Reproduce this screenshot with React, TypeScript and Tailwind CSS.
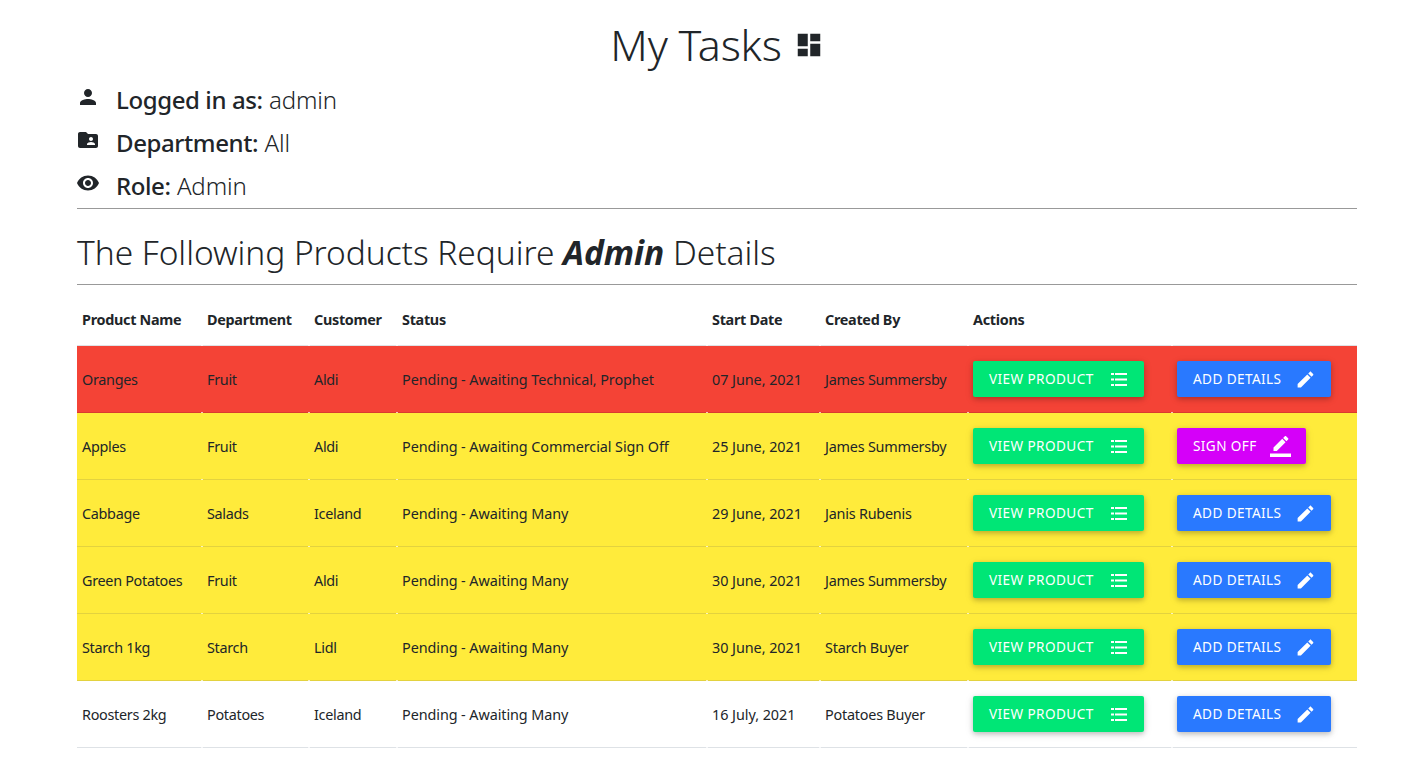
const FONT = "font-['Noto_Sans','Open_Sans',sans-serif]";
const P = {
  person: <path d="M12 12c2.21 0 4-1.79 4-4s-1.79-4-4-4-4 1.79-4 4 1.79 4 4 4zm0 2c-2.67 0-8 1.34-8 4v2h16v-2c0-2.66-5.33-4-8-4z" />,
  folder: <path d="M20 6h-8l-2-2H4c-1.1 0-1.99.9-1.99 2L2 18c0 1.1.9 2 2 2h16c1.1 0 2-.9 2-2V8c0-1.1-.9-2-2-2zm-5 3c1.1 0 2 .9 2 2s-.9 2-2 2-2-.9-2-2 .9-2 2-2zm4 8h-8v-1c0-1.33 2.67-2 4-2s4 .67 4 2v1z" />,
  eye: <path d="M12 4.5C7 4.5 2.73 7.61 1 12c1.73 4.39 6 7.5 11 7.5s9.27-3.11 11-7.5c-1.73-4.39-6-7.5-11-7.5zM12 17c-2.76 0-5-2.24-5-5s2.24-5 5-5 5 2.24 5 5-2.24 5-5 5zm0-8c-1.66 0-3 1.34-3 3s1.34 3 3 3 3-1.34 3-3-1.34-3-3-3z" />,
  dash: <path d="M3 13h8V3H3v10zm0 8h8v-6H3v6zm10 0h8V11h-8v10zm0-18v6h8V3h-8z" />,
  pen: <path d="M3 17.25V21h3.75L17.81 9.94l-3.75-3.75L3 17.25zM20.71 7.04c.39-.39.39-1.02 0-1.41l-2.34-2.34c-.39-.39-1.02-.39-1.41 0l-1.83 1.83 3.75 3.75 1.83-1.83z" />,
  sign: <><path d="M17.75 7L14 3.25l-10 10V17h3.75l10-10zm2.96-2.96c.39-.39.39-1.02 0-1.41L18.37.29c-.39-.39-1.02-.39-1.41 0L15 2.25 18.75 6l1.96-1.96z" /><path d="M0 20h24v4H0z" /></>,
};
function Icon({ d, className }: { d: keyof typeof P; className: string }) {
  return <svg viewBox="0 0 24 24" fill="currentColor" className={className}>{P[d]}</svg>;
}
function ListIcon() {
  return (
    <svg viewBox="0 0 16 13" fill="currentColor" className="w-[16px] h-[13px] ml-[17px]">
      <path d="M0 0h3v2H0zM4 0h12v2H4zM0 5.5h3v2H0zM4 5.5h12v2H4zM0 11h3v2H0zM4 11h12v2H4z" />
    </svg>
  );
}
type Row = [string, string, string, string, string, string, string, string];
const R = "bg-[#f44336]", Y = "bg-[#ffeb3b]", W = "bg-white";
const rows: Row[] = [
  ["Oranges", "Fruit", "Aldi", "Pending - Awaiting Technical, Prophet", "07 June, 2021", "James Summersby", R, "border-[#d93a30]"],
  ["Apples", "Fruit", "Aldi", "Pending - Awaiting Commercial Sign Off", "25 June, 2021", "James Summersby", Y, "border-[#e3d23f]"],
  ["Cabbage", "Salads", "Iceland", "Pending - Awaiting Many", "29 June, 2021", "Janis Rubenis", Y, "border-[#e3d23f]"],
  ["Green Potatoes", "Fruit", "Aldi", "Pending - Awaiting Many", "30 June, 2021", "James Summersby", Y, "border-[#e3d23f]"],
  ["Starch 1kg", "Starch", "Lidl", "Pending - Awaiting Many", "30 June, 2021", "Starch Buyer", Y, "border-[#e3d23f]"],
  ["Roosters 2kg", "Potatoes", "Iceland", "Pending - Awaiting Many", "16 July, 2021", "Potatoes Buyer", W, "border-[#dee2e6]"],
];
const heads = ["Product Name", "Department", "Customer", "Status", "Start Date", "Created By", "Actions", ""];
const widths = ["w-[125px]", "w-[107px]", "w-[88px]", "w-[310px]", "w-[113px]", "w-[148px]", "w-[204px]", "w-[185px]"];
const track = ["tracking-[-0.3px]", "tracking-[-0.3px]", "tracking-[-0.3px]", "tracking-[-0.08px]", "tracking-[-0.05px]", "tracking-[-0.22px]"];
const btn = "inline-flex items-center h-[36px] rounded-[2px] pl-[16px] text-white text-[13.6px] tracking-[0.4px] shadow-[0_2px_5px_rgba(0,0,0,0.2),0_2px_10px_rgba(0,0,0,0.1)]";
const tick = "relative not-first:after:absolute not-first:after:left-[-1px] not-first:after:bottom-[-1px] not-first:after:w-[2px] not-first:after:h-[1px] not-first:after:bg-white/70";
const td = `${tick} px-[5px] py-0 align-middle text-[14.4px] text-[#212529] border-b whitespace-nowrap`;
export default function App() {
  return (
    <div className={`${FONT} bg-white min-h-[761px] text-[#212529] pl-[77px] pr-[61px]`}>
      <h1 className="h-[78px] pt-[14px] flex justify-center items-start gap-[12px] text-[43px] leading-[62px] font-light tracking-[-0.2px]">
        <span>My Tasks</span>
        <Icon d="dash" className="w-[30px] h-[30px] mt-[16px]" />
      </h1>
      <div className="text-[24px] leading-[43px]">
        {[["person", "Logged in as:", "admin"], ["folder", "Department:", "All"], ["eye", "Role:", "Admin"]].map(([i, l, v]) => (
          <div key={l} className="flex h-[43px]">
            <Icon d={i as keyof typeof P} className="w-[24px] h-[24px] mt-[7px] mr-[15px] -translate-x-px" />
            <div><span className="font-medium tracking-[-0.4px]">{l}</span> <span className="font-light tracking-[-0.1px]">{v}</span></div>
          </div>
        ))}
      </div>
      <hr className="border-0 border-t border-[#999] mt-[1px]" />
      <h2 className="h-[75px] pt-[19px] text-[33.5px] leading-[48px] font-light tracking-[-0.05px]">
        The Following Products Require <b className="font-bold italic">Admin</b> Details
      </h2>
      <hr className="border-0 border-t border-[#999]" />
      <table className="w-[1280px] table-fixed border-separate border-spacing-0">
        <colgroup>{widths.map((w, i) => <col key={i} className={w} />)}</colgroup>
        <thead>
          <tr className="h-[61px]">
            {heads.map((h, i) => <th key={i} className={`${tick} px-[5px] pt-[9px] text-left align-middle text-[14.4px] tracking-[-0.3px] font-bold whitespace-nowrap border-b border-[#dee2e6]`}>{h}</th>)}
          </tr>
        </thead>
        <tbody>
          {rows.map((r) => (
            <tr key={r[0]} className={`h-[67px] ${r[6]}`}>
              {r.slice(0, 6).map((c, i) => <td key={i} className={`${td} ${r[7]} ${track[i]} pt-[1px]`}>{c}</td>)}
              <td className={`${td} ${r[7]}`}>
                <button className={`${btn} w-[171px] bg-[#00e676]`}>
                  <span className="w-[105px] text-left">VIEW PRODUCT</span>
                  <ListIcon />
                </button>
              </td>
              <td className={`${td} ${r[7]}`}>
                {r[0] === "Apples" ? (
                  <button className={`${btn} w-[129px] bg-[#d500f9]`}>
                    <span className="w-[63px] text-left">SIGN OFF</span>
                    <Icon d="sign" className="w-[21px] h-[21px] ml-[14px]" />
                  </button>
                ) : (
                  <button className={`${btn} w-[154px] bg-[#2979ff]`}>
                    <span className="w-[88px] text-left">ADD DETAILS</span>
                    <Icon d="pen" className="w-[21px] h-[21px] ml-[14px]" />
                  </button>
                )}
              </td>
            </tr>
          ))}
        </tbody>
      </table>
    </div>
  );
}
